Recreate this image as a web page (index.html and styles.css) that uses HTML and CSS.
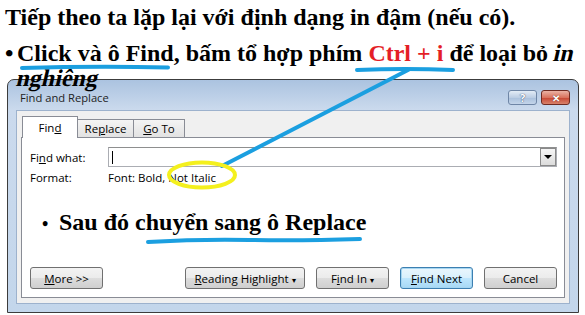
FILE: index.html
```html
<!DOCTYPE html>
<html lang="vi">
<head>
    <meta charset="UTF-8">
    <meta name="viewport" content="width=device-width, initial-scale=1.0">
    <title>Find and Replace</title>
    <link rel="stylesheet" href="styles.css">
</head>
<body>
    <div class="slide">
        <p class="lead">Tiếp theo ta lặp lại với định dạng in đậm (nếu có).</p>
        <p class="bullet"><span class="dot">•</span>Click và ô Find, bấm tổ hợp phím <span class="red">Ctrl + i</span> để loại bỏ <span class="slant">in</span> <span class="slant">nghiêng</span></p>
    </div>

    <div class="dialog">
        <div class="titlebar">
            <span class="title">Find and Replace</span>
            <div class="caption-btns">
                <span class="cap help">?</span>
                <span class="cap close">✕</span>
            </div>
        </div>

        <div class="client">
            <div class="tabs">
                <span class="tab active">Fin<u>d</u></span>
                <span class="tab">Re<u>p</u>lace</span>
                <span class="tab"><u>G</u>o To</span>
            </div>

            <div class="panel">
                <div class="row">
                    <span class="label">Fi<u>n</u>d what:</span>
                    <div class="combo">
                        <span class="caret"></span>
                        <span class="combo-btn"><span class="tri"></span></span>
                    </div>
                </div>
                <div class="row format">
                    <span class="label">Format:</span>
                    <span>Font: Bold, Not Italic</span>
                </div>

                <div class="note"><span class="dot">•</span>Sau đó chuyển sang ô Replace</div>

                <div class="buttons">
                    <button class="btn more"><u>M</u>ore &gt;&gt;</button>
                    <div class="btn-group">
                        <button class="btn wide"><u>R</u>eading Highlight <span class="arr">▾</span></button>
                        <button class="btn">F<u>i</u>nd In <span class="arr">▾</span></button>
                        <button class="btn default"><u>F</u>ind Next</button>
                        <button class="btn">Cancel</button>
                    </div>
                </div>
            </div>
        </div>
    </div>

    <!-- nét vẽ tay trên ảnh -->
    <svg class="marks" width="585" height="315" viewBox="0 0 585 315">
        <path d="M22 68 Q95 66 168 67.5" />
        <path d="M357 70 Q405 68 453 70" />
        <path d="M222 166 L408 70" />
        <path d="M148 242 Q200 239 250 240 T360 239" />
        <ellipse class="ring" cx="202" cy="175" rx="33" ry="12.5" />
    </svg>
</body>
</html>
```

FILE: styles.css
```css
body {
    margin: 0;
    width: 585px;
    height: 315px;
    overflow: hidden;
    position: relative;
    background: #ffffff;
    font-family: "Liberation Serif", "Times New Roman", serif;
}

/* chữ trên slide */
.slide {
    position: relative;
    z-index: 2;
    height: 79px;
    padding: 5px 0 0 5px;
    box-sizing: border-box;
    font-size: 24px;
    line-height: 25px;
    font-weight: bold;
    color: #000;
}

.lead {
    margin: 0 0 11px;
    white-space: nowrap;
}

.bullet {
    margin: 0;
    padding-left: 12px;
    text-indent: -12px;
}

.dot {
    display: inline-block;
    width: 12px;
    text-indent: 0;
}

.red {
    color: #e41e26;
}

.slant {
    display: inline-block;
    text-indent: 0;
    transform: skewX(-13deg);
}

/* hộp thoại */
.dialog {
    width: 572px;
    height: 234px;
    margin-left: 7px;
    box-sizing: border-box;
    border: 1px solid #3c3c3c;
    border-radius: 7px 7px 0 0;
    background: linear-gradient(#abc3e0, #cbdaed 30px, #c3d6eb);
    padding: 0 8px 8px;
    display: flex;
    flex-direction: column;
    font-family: "Open Sans", "Liberation Sans", sans-serif;
    font-size: 11.5px;
    color: #000;
}

.titlebar {
    height: 30px;
    display: flex;
    justify-content: space-between;
    align-items: flex-start;
}

.title {
    margin: 11px 0 0 4px;
    font-size: 11.2px;
    line-height: 14px;
    color: #1e1e1e;
}

.caption-btns {
    display: flex;
    gap: 4px;
    margin-top: 10px;
}

.cap {
    width: 29px;
    height: 15px;
    box-sizing: border-box;
    border-radius: 3px;
    display: flex;
    align-items: center;
    justify-content: center;
    font-size: 11px;
    font-weight: bold;
    line-height: 1;
}

.help {
    border: 1px solid #6f86a6;
    background: linear-gradient(#e3ecf6, #bccee4 50%, #a9c0dc 51%, #c4d5ea);
    color: #fff;
    text-shadow: 0 0 1px #40587a, 0 0 1px #40587a;
}

.close {
    border: 1px solid #6e2b22;
    background: linear-gradient(#eab2a4, #d9735e 50%, #c64532 51%, #d8826a);
    color: #fff;
    font-size: 10px;
    text-shadow: 0 0 1px #5a1a10;
}

.client {
    flex: 1;
    background: #f0f0f0;
    border: 1px solid #9db2cd;
    padding: 5px 4px 5px 4px;
    display: flex;
    flex-direction: column;
}

.tabs {
    display: flex;
    align-items: flex-end;
    height: 22px;
    margin-bottom: -1px;
    padding-left: 1px;
    position: relative;
    z-index: 1;
}

.tab {
    height: 19px;
    box-sizing: border-box;
    border: 1px solid #898c95;
    margin-left: -1px;
    background: linear-gradient(#f4f4f4, #e2e2e2);
    display: flex;
    align-items: center;
    justify-content: center;
    width: 57px;
}

.tab:last-child {
    width: 52px;
}

.tab.active {
    height: 22px;
    width: 56px;
    margin-left: 0;
    border-bottom: none;
    background: #ffffff;
    position: relative;
    z-index: 1;
}

.panel {
    flex: 1;
    background: #ffffff;
    border: 1px solid #898c95;
    padding: 9px 7px 8px 8px;
    display: flex;
    flex-direction: column;
}

.row {
    display: flex;
    align-items: center;
}

.label {
    width: 78px;
    flex: none;
}

.combo {
    flex: 1;
    height: 20px;
    box-sizing: border-box;
    border: 1px solid #abadb3;
    border-top-color: #8e8f8f;
    display: flex;
    justify-content: space-between;
    align-items: center;
}

.caret {
    width: 1px;
    height: 13px;
    background: #000;
    margin-left: 3px;
}

.combo-btn {
    width: 16px;
    height: 18px;
    box-sizing: border-box;
    border: 1px solid #8a8a8a;
    background: linear-gradient(#f6f6f6, #dcdcdc);
    display: flex;
    align-items: center;
    justify-content: center;
}

.tri {
    width: 0;
    height: 0;
    border-left: 4px solid transparent;
    border-right: 4px solid transparent;
    border-top: 4px solid #000;
}

.format {
    height: 21px;
}

.note {
    margin-top: 21px;
    margin-left: 12px;
    font-family: "Liberation Serif", "Times New Roman", serif;
    font-size: 24px;
    line-height: 26px;
    font-weight: bold;
}

.note .dot {
    width: 17px;
    font-size: 18px;
}

.buttons {
    margin-top: auto;
    display: flex;
    justify-content: space-between;
}

.btn-group {
    display: flex;
    gap: 11px;
}

.btn {
    width: 73px;
    height: 22px;
    box-sizing: border-box;
    border: 1px solid #707070;
    border-radius: 3px;
    background: linear-gradient(#f3f3f3, #ebebeb 50%, #dddddd 51%, #cfcfcf);
    font-family: "Open Sans", "Liberation Sans", sans-serif;
    font-size: 11.5px;
    color: #000;
    padding: 0;
}

.btn.wide {
    width: 120px;
}

.btn.default {
    border-color: #3c7fb1;
    box-shadow: inset 0 0 0 1px #a6d6f1;
    background: linear-gradient(#eaf6fd, #d9f0fc 50%, #bee6fd 51%, #a7d9f5);
}

.arr {
    font-size: 8px;
}

/* nét vẽ tay */
.marks {
    position: absolute;
    top: 0;
    left: 0;
    z-index: 3;
    pointer-events: none;
    fill: none;
    stroke: #1b9fe0;
    stroke-width: 4;
    stroke-linecap: round;
}

.marks .ring {
    stroke: #f4f01e;
    stroke-width: 4;
}
```
